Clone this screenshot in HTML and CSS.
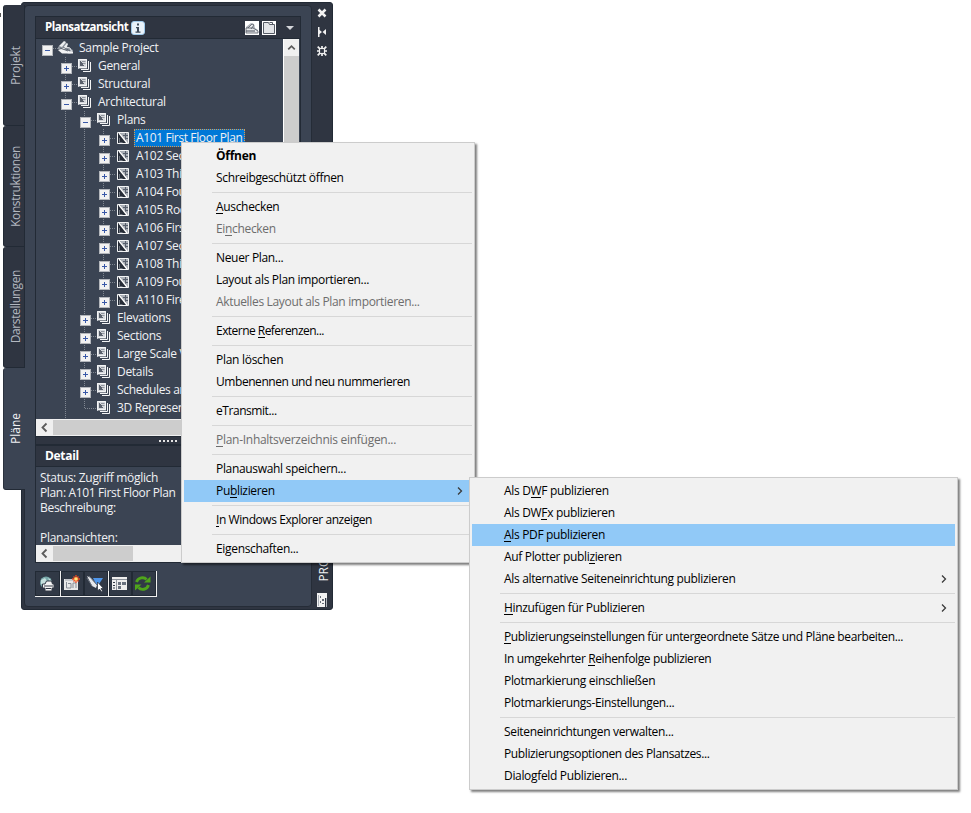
FILE: index.html
```html
<!DOCTYPE html>
<html lang="de">
<head>
<meta charset="utf-8">
<title>Plansatzansicht</title>
<link rel="stylesheet" href="styles.css">
</head>
<body>
<svg class="defs" aria-hidden="true">
  <symbol id="set" viewBox="0 0 18 18">
    <path d="M2 2h9v10H2z" fill="#c9ccd2"/>
    <path d="M2.500 10.500V2.500h8v8z" fill="#d5d8dc" stroke="#f3f4f5"/>
    <path d="M4 4h1v1h1v1h1v2h1v1H4z" fill="#59606c"/>
    <path d="M6 4.500h3.500M7 6.500h2.500" stroke="#7c838d" stroke-width=".8"/>
    <path d="M3 12h9V3" fill="none" stroke="#3b4453" stroke-width="1"/>
    <path d="M5 12.500h7.500V4" fill="none" stroke="#f3f4f5"/>
    <path d="M7 14.500h7.500V5" fill="none" stroke="#f3f4f5"/>
  </symbol>
  <symbol id="sheet" viewBox="0 0 18 18">
    <path d="M3.500 3.500h11v11h-11z" fill="#a9aeb6" stroke="#f3f4f5"/>
    <path d="M4 4h2l7 10H4z" fill="#262c37"/>
    <path d="M11.500 4v9M9 6.500h5M11 9.500h3" stroke="#565e6b"/>
    <path d="M5 4l8 10" stroke="#fff" stroke-width="1.400"/>
    <path d="M5.500 9v4.500h3" fill="none" stroke="#8c939d" stroke-width=".7"/>
  </symbol>
  <symbol id="project" viewBox="0 0 18 18">
    <path d="M1 8l6-5 3 1v4l6 3v3l-4 1-11-5z" fill="#8e959f"/>
    <path d="M2 7l5-5 2 1-4 5zM5 10l5-6 1 1-2 5z" fill="#eceef0"/>
    <path d="M1 11l4-1 11 3v1.500H5z" fill="#f3f4f5"/>
    <path d="M9 8l4 1 2 4" fill="none" stroke="#e4e6e9"/>
    <path d="M3 9l8 3M6 8l7 4" stroke="#4c5461" stroke-width=".8"/>
  </symbol>
  <symbol id="chev" viewBox="0 0 8 10"><path d="M2 1.500l3.500 3.500-3.500 3.500" fill="none" stroke="#3b3b3b" stroke-width="1.300"/></symbol>
</svg>
<i class="stray"></i>
<main class="window">
  <nav class="tabs">
    <div class="tab t1"><span>Projekt</span></div>
    <div class="tab t2"><span>Konstruktionen</span></div>
    <div class="tab t3"><span>Darstellungen</span></div>
    <div class="tab active t4"><span>Pläne</span></div>
  </nav>
  <section class="palette">
    <div class="content">
      <div class="panel">
        <header class="bar main">
          <b>Plansatzansicht</b>
          <svg class="info" viewBox="0 0 14 14"><rect x=".5" y=".5" width="13" height="13" rx="2.500" fill="#e9f2f9" stroke="#9fc9ea"/><path d="M6 2.500h2v2H6zM5 6h3v4.500h1.500v1.200h-5v-1.200H6V7.200H5z" fill="#3f4b5a"/></svg>
          <span class="grow"></span>
          <svg class="hbtn" viewBox="0 0 14 14"><path d="M0 0h14v14H0z" fill="#fff"/><path d="M1 6l5-4 3 1 1 4 3 2v3H1z" fill="#aeb3ba"/><path d="M1 7h7l5 3v2H1zM3 7l4-4 2 1-3 4" fill="#e8eaec" stroke="#555b65" stroke-width=".8"/><path d="M1 10h9" stroke="#444b56"/></svg>
          <svg class="hbtn" viewBox="0 0 14 14"><path d="M0 0h14v14H0z" fill="#fff"/><path d="M1.500 12.500v-11h5l1 2h5v9z" fill="#e3e5e8" stroke="#555b65"/><path d="M7.500 1.500h3v2" fill="none" stroke="#555b65"/></svg>
          <i class="drop"></i>
        </header>
        <div class="treewrap">
          <div class="tree">
            <div class="row"><i class="c e minus"></i><svg><use href="#project"/></svg><span>Sample Project</span></div>
            <div class="row"><i class="c"></i><i class="c e v"></i><svg><use href="#set"/></svg><span>General</span></div>
            <div class="row"><i class="c"></i><i class="c e v"></i><svg><use href="#set"/></svg><span>Structural</span></div>
            <div class="row"><i class="c"></i><i class="c e v minus"></i><svg><use href="#set"/></svg><span>Architectural</span></div>
            <div class="row"><i class="c"></i><i class="c v"></i><i class="c e v minus"></i><svg><use href="#set"/></svg><span>Plans</span></div>
            <div class="row"><i class="c"></i><i class="c v"></i><i class="c v"></i><i class="c e v"></i><svg><use href="#sheet"/></svg><span class="sel">A101 First Floor Plan</span></div>
            <div class="row"><i class="c"></i><i class="c v"></i><i class="c v"></i><i class="c e v"></i><svg><use href="#sheet"/></svg><span>A102 Sec</span></div>
            <div class="row"><i class="c"></i><i class="c v"></i><i class="c v"></i><i class="c e v"></i><svg><use href="#sheet"/></svg><span>A103 Thi</span></div>
            <div class="row"><i class="c"></i><i class="c v"></i><i class="c v"></i><i class="c e v"></i><svg><use href="#sheet"/></svg><span>A104 Fou</span></div>
            <div class="row"><i class="c"></i><i class="c v"></i><i class="c v"></i><i class="c e v"></i><svg><use href="#sheet"/></svg><span>A105 Roo</span></div>
            <div class="row"><i class="c"></i><i class="c v"></i><i class="c v"></i><i class="c e v"></i><svg><use href="#sheet"/></svg><span>A106 Firs</span></div>
            <div class="row"><i class="c"></i><i class="c v"></i><i class="c v"></i><i class="c e v"></i><svg><use href="#sheet"/></svg><span>A107 Sec</span></div>
            <div class="row"><i class="c"></i><i class="c v"></i><i class="c v"></i><i class="c e v"></i><svg><use href="#sheet"/></svg><span>A108 Thi</span></div>
            <div class="row"><i class="c"></i><i class="c v"></i><i class="c v"></i><i class="c e v"></i><svg><use href="#sheet"/></svg><span>A109 Fou</span></div>
            <div class="row"><i class="c"></i><i class="c v"></i><i class="c v"></i><i class="c e v last"></i><svg><use href="#sheet"/></svg><span>A110 Fire</span></div>
            <div class="row"><i class="c"></i><i class="c v"></i><i class="c e v"></i><svg><use href="#set"/></svg><span>Elevations</span></div>
            <div class="row"><i class="c"></i><i class="c v"></i><i class="c e v"></i><svg><use href="#set"/></svg><span>Sections</span></div>
            <div class="row"><i class="c"></i><i class="c v"></i><i class="c e v"></i><svg><use href="#set"/></svg><span>Large Scale V</span></div>
            <div class="row"><i class="c"></i><i class="c v"></i><i class="c e v"></i><svg><use href="#set"/></svg><span>Details</span></div>
            <div class="row"><i class="c"></i><i class="c v"></i><i class="c e v"></i><svg><use href="#set"/></svg><span class="narrow">Schedules an</span></div>
            <div class="row"><i class="c"></i><i class="c v"></i><i class="c v last leaf"></i><svg><use href="#set"/></svg><span class="narrow">3D Represen</span></div>
            <div class="row"><i class="c"></i><i class="c v"></i></div>
          </div>
          <div class="vscroll"><svg viewBox="0 0 16 17"><path d="M4.500 10.500l3.500-3.500 3.500 3.500" fill="none" stroke="#5c5c5c" stroke-width="1.800"/></svg></div>
        </div>
        <div class="hscroll"><svg viewBox="0 0 17 17"><path d="M10.500 4.500l-4 4 4 4" fill="none" stroke="#5c5c5c" stroke-width="1.800"/></svg><i class="thumb"></i></div>
        <div class="split"><i></i><i></i><i></i><i></i><i></i></div>
        <header class="bar detail"><b>Detail</b></header>
        <div class="info-text"><div class="wide">Status: Zugriff möglich</div><div class="narrow">Plan: A101 First Floor Plan</div><div>Beschreibung:</div><div class="gap">Planansichten:</div></div>
        <div class="hscroll"><svg viewBox="0 0 17 17"><path d="M10.500 4.500l-4 4 4 4" fill="none" stroke="#5c5c5c" stroke-width="1.800"/></svg><i class="thumb short"></i></div>
      </div>
      <div class="toolbar">
        <div class="group"><button aria-label="Publizieren"><svg viewBox="0 0 18 18"><circle cx="8" cy="7.500" r="6" fill="#79a9aa"/><path d="M3 5l4-2 2 3-3 4-3-1zM10 3l3 2-1 2z" fill="#c5e0dd"/><path d="M7 9l1.500-3h5l1 3h1.500v4H14v3H7v-3H4.500V9z" fill="#f5f5f5" stroke="#343b47"/><path d="M6 11h9M8 13.500h5" stroke="#343b47"/></svg></button></div>
        <div class="group"><button aria-label="Neu"><svg viewBox="0 0 18 18"><path d="M1 4h14v11H1z" fill="#e8e8e8"/><path d="M3.500 7v6H8V8.500H5M10 13V8h3v5" fill="none" stroke="#858b94"/><path d="M2 5h9" stroke="#a5a9b0"/><path d="M13 0v8M9 4h8M10.500 1.500l5 5M15.500 1.500l-5 5" stroke="#ee4b20" stroke-width="1.300"/><circle cx="13" cy="4" r="1.800" fill="#ffe477"/></svg></button><button aria-label="Auswahl"><svg viewBox="0 0 18 18"><path d="M7 3h10l-4 6h-3z" fill="#4f96ea"/><path d="M1 1l4 2 6 7-1 3-4-2z" fill="#e6e8eb"/><path d="M3 1l8 9M1 3l5 8" stroke="#69717d"/><path d="M11.500 7v9l2-2 2 3 1-1-1.500-2.500h2.500z" fill="#fff" stroke="#222a35" stroke-width=".7"/></svg></button></div>
        <div class="group"><button aria-label="Eigenschaften"><svg viewBox="0 0 18 18"><path d="M1 2h15v13H1z" fill="#eee"/><path d="M1 4.500h15M5.500 5v10" stroke="#8d939c"/><path d="M2 7.500h2M2 10.500h2M2 13h2" stroke="#333b47"/><path d="M7 7h3v3H7zM11 7h4v3h-4zM7 11h3v3H7z" fill="#69717e"/></svg></button><button aria-label="Aktualisieren"><svg viewBox="0 0 18 18"><path d="M2.500 7c1.500-4.500 7.500-5.500 10-2.500M14.500 10c-1.500 5-7.500 5.500-10 2.500" fill="none" stroke="#4fa51b" stroke-width="2.800"/><path d="M16.500 1.500v6H10zM1 15.500v-6h6.500z" fill="#4fa51b"/></svg></button></div>
      </div>
    </div>
    <aside class="strip">
      <svg class="s1" viewBox="0 0 10 10"><path d="M1.500 1.500l7 7M8.500 1.500l-7 7" stroke="#f2f2f2" stroke-width="2.500"/></svg>
      <svg class="s2" viewBox="0 0 10 10"><path d="M1 0h1.500v10H1zM2 2.500L5 5 2 7.500zM9 2v6L5.500 5z" fill="#f2f2f2"/></svg>
      <svg class="s3" viewBox="0 0 10 10"><path d="M5 0v10M0 5h10M.7.7l8.600 8.600M9.300.7L.7 9.300" stroke="#f2f2f2" stroke-width="1.700"/><rect x="2.500" y="2.500" width="5" height="5" fill="#2f3541" stroke="#f2f2f2" stroke-width="1.200"/></svg>
      <span class="vtitle">PROJEKTNAVIGATOR</span>
      <svg class="s4" viewBox="0 0 10 14"><path d="M0 0h10v5H8v9H0z" fill="#f2f2f2"/><path d="M3 3h1v2H3zM5 6h2v2H5zM3 8h1v2H3zM5 10h2v1H5z" fill="#656c77"/><path d="M1.500 2v11M9.500 5v9" stroke="#aeb3ba"/></svg>
    </aside>
  </section>
</main>

<div class="menu first">
  <div class="item bold">Öffnen</div>
  <div class="item">Schreibgeschützt öffnen</div>
  <hr>
  <div class="item"><span><u>A</u>uschecken</span></div>
  <div class="item off"><span>Ei<u>n</u>checken</span></div>
  <hr>
  <div class="item">Neuer Plan...</div>
  <div class="item">Layout als Plan importieren...</div>
  <div class="item off">Aktuelles Layout als Plan importieren...</div>
  <hr>
  <div class="item tighter"><span>Externe <u>R</u>eferenzen...</span></div>
  <hr>
  <div class="item loose">Plan löschen</div>
  <div class="item tight">Umbenennen und neu nummerieren</div>
  <hr>
  <div class="item tight">eTransmit...</div>
  <hr>
  <div class="item off loose"><span><u>P</u>lan-Inhaltsverzeichnis einfügen...</span></div>
  <hr>
  <div class="item">Planauswahl speichern...</div>
  <div class="item hot"><span>Pu<u>b</u>lizieren</span><svg><use href="#chev"/></svg></div>
  <hr>
  <div class="item tight"><span><u>I</u>n Windows Explorer anzeigen</span></div>
  <hr>
  <div class="item">Eigenschaften...</div>
</div>

<div class="menu second">
  <div class="item"><span>Als D<u>W</u>F publizieren</span></div>
  <div class="item"><span>Als DW<u>F</u>x publizieren</span></div>
  <div class="item hot"><span><u>A</u>ls PDF publizieren</span></div>
  <div class="item"><span>Auf Plotter publi<u>z</u>ieren</span></div>
  <div class="item"><span>Als alternative Seiteneinrichtung publizieren</span><svg><use href="#chev"/></svg></div>
  <hr>
  <div class="item"><span><u>H</u>inzufügen für Publizieren</span><svg><use href="#chev"/></svg></div>
  <hr>
  <div class="item long"><span><u>P</u>ublizierungseinstellungen für untergeordnete Sätze und Pläne bearbeiten...</span></div>
  <div class="item long"><span>In umgekehrter <u>R</u>eihenfolge publizieren</span></div>
  <div class="item">Plotmarkierung einschließen</div>
  <div class="item">Plotmarkierungs-Einstellungen...</div>
  <hr>
  <div class="item">Seiteneinrichtungen verwalten...</div>
  <div class="item long">Publizierungsoptionen des Plansatzes...</div>
  <div class="item">Dialogfeld Publizieren...</div>
</div>
</body>
</html>
```
FILE: styles.css
```css
* { box-sizing: border-box; }
body {
  margin: 0;
  height: 813px;
  overflow: hidden;
  background: #fff;
  font: 12px/18px "Open Sans", "Noto Sans", sans-serif;
  letter-spacing: -0.3px;
  color: #f0f1f3;
}
svg { display: block; flex: none; }
.defs { position: absolute; width: 0; height: 0; }
.stray { position: absolute; left: 0; top: 13px; width: 1px; height: 4px; background: #555; }

.window { display: flex; align-items: flex-start; padding: 2px 0 0 3px; }

.tabs { display: flex; flex-direction: column; width: 22px; margin: 3px -4px 0 0; z-index: 1; }
.tab {
  display: flex;
  justify-content: center;
  height: 121px;
  width: 22px;
  background: #2f3541;
  border: 1px solid #222a35;
  border-top-width: 0;
  border-radius: 3px 0 0 3px;
  color: #b3b8c0;
}
.tab span {
  writing-mode: vertical-rl;
  transform: rotate(180deg);
  line-height: 20px;
  margin: auto -3px auto 0;
  letter-spacing: -0.4px;
}
.tab.t1 span { letter-spacing: -0.1px; }
.tab.active { height: 122px; background: #3b4453; border-right: 0; color: #f0f1f3; border-left-color: #2b323e; }
.tab.active span { letter-spacing: 0; }

.palette {
  display: flex;
  width: 312px;
  height: 608px;
  background: #2f3541;
  border: 1px solid #222a35;
  border-radius: 3px;
  padding: 2px 0 2px 2px;
}
.content {
  width: 288px;
  background: #3b4453;
  border: 1px solid #252c37;
  border-radius: 4px;
  padding: 10px;
}
.panel { width: 266px; height: 547px; border: 1px solid #222a35; display: flex; flex-direction: column; }
.bar {
  display: flex;
  align-items: center;
  height: 22px;
  flex: none;
  background: #2f3541;
  border-bottom: 1px solid #222a35;
  padding: 0 6px 0 9px;
  color: #fff;
}
.main b { width: 84px; font-size: 11.5px; letter-spacing: -0.5px; margin-top: -1px; white-space: nowrap; }
.info { width: 14px; height: 14px; margin-left: 2px; }
.grow { flex: 1; }
.hbtn { width: 14px; height: 14px; margin-right: 3px; }
.drop { margin-left: 7px; border: 4px solid transparent; border-top: 4px solid #d4d6da; border-bottom: 0; }

.treewrap { display: flex; height: 380px; flex: none; }
.tree { flex: 1; overflow: hidden; padding-left: 2px; }
.row { display: flex; height: 18px; white-space: nowrap; }
.row svg { width: 18px; height: 18px; }
.row > span { padding: 0 2px; margin-left: 2px; line-height: 18px; }
.row > .sel { width: 111px; background: #0078d7; outline: 1px dotted #e09a4a; outline-offset: -1px; letter-spacing: -0.38px; }
.c { width: 19px; height: 18px; flex: none; position: relative; }
.v { background: repeating-linear-gradient(#808791 0 1px, transparent 1px 2px) 8px 0 / 1px 100% no-repeat; }
.last { background-size: 1px 9px; }
.e::before, .leaf::before {
  content: "";
  position: absolute;
  left: 9px;
  top: 9px;
  width: 11px;
  height: 1px;
  background: repeating-linear-gradient(90deg, #808791 0 1px, transparent 1px 2px);
}
.e::after {
  content: "";
  position: absolute;
  left: 4px;
  top: 6px;
  width: 9px;
  height: 9px;
  border: 1px solid #b4b7bc;
  background:
    linear-gradient(#3858a8, #3858a8) center / 5px 1px no-repeat,
    linear-gradient(#3858a8, #3858a8) center / 1px 5px no-repeat,
    #f2f2f2;
}
.minus::after { background: linear-gradient(#3858a8, #3858a8) center / 5px 1px no-repeat, #f2f2f2; }

.vscroll { width: 16px; margin-right: 1px; background: #cdcdcd; border-left: 1px solid #fff; }
.vscroll svg { width: 15px; height: 17px; background: #f0f0f0; }
.hscroll { display: flex; height: 17px; flex: none; background: #f0f0f0; }
.hscroll svg { width: 17px; height: 17px; }
.thumb { width: 180px; height: 15px; margin-top: 1px; background: #cdcdcd; }
.short { width: 80px; }
.split { display: flex; gap: 2px; height: 10px; flex: none; background: #2f3541; border: 1px solid #222a35; border-width: 1px 0 2px; padding: 3px 0 0 123px; }
.split i { width: 2px; height: 2px; background: #e4e4e4; }
.detail { height: 21px; }
.info-text { flex: 1; padding: 3px 0 0 4px; line-height: 15px; white-space: nowrap; }
.gap { margin-top: 15px; }
.wide { letter-spacing: -0.3px; }
.narrow { letter-spacing: -0.35px; }

.toolbar { display: flex; margin-top: 8px; height: 26px; width: 122px; border-bottom: 1px solid #f0f0f0; }
.group { display: flex; height: 25px; border-right: 1px solid #f0f0f0; }
.group button { width: 23px; height: 25px; padding: 2px 1px; background: #313946; border: 1px solid #222a35; }
.group:first-child button { width: 25px; padding-left: 2px; }
.group button:nth-child(2) { width: 24px; }
.group svg { width: 18px; height: 18px; }

.strip { flex: 1; display: flex; flex-direction: column; align-items: center; padding-right: 1px; }
.strip svg { width: 10px; height: 10px; }
.s1 { margin-top: 3px; }
.s2 { margin-top: 9px; }
.s3 { margin-top: 9px; }
.vtitle { writing-mode: vertical-rl; transform: rotate(180deg); line-height: 18px; margin: auto -4px 0 0; letter-spacing: 0; }
.strip .s4 { width: 10px; height: 14px; margin: 11px 0 0; }

.menu {
  position: absolute;
  z-index: 2;
  background: #f1f1f1;
  border: 1px solid #ccc;
  padding: 2px;
  color: #000;
  letter-spacing: -0.33px;
}
.first { left: 181px; top: 142px; width: 294px; height: 421px; box-shadow: 2px 2px 2px rgba(0, 0, 0, .5); }
.second { left: 469px; top: 477px; width: 489px; height: 313px; z-index: 3; box-shadow: 2px 2px 2px rgba(0, 0, 0, .5); }
.item { display: flex; align-items: center; height: 22px; padding: 0 7px 0 32px; white-space: nowrap; }
.item svg { width: 8px; height: 10px; margin: 0 0 0 auto; }
.first .item svg { margin-right: 1px; }
.item u { text-decoration: none; border-bottom: 1px solid currentColor; display: inline-block; line-height: 13px; }
.off { color: #6d6d6d; }
.bold { font-weight: 700; letter-spacing: -0.25px; }
.loose { letter-spacing: -0.28px; }
.tight { letter-spacing: -0.44px; }
.tighter { letter-spacing: -0.54px; }
.long { letter-spacing: -0.38px; }
.hot { background: #91c9f7; }
.menu hr { height: 1px; margin: 3px 0 3px 28px; border: 0; background: #d7d7d7; }
```
